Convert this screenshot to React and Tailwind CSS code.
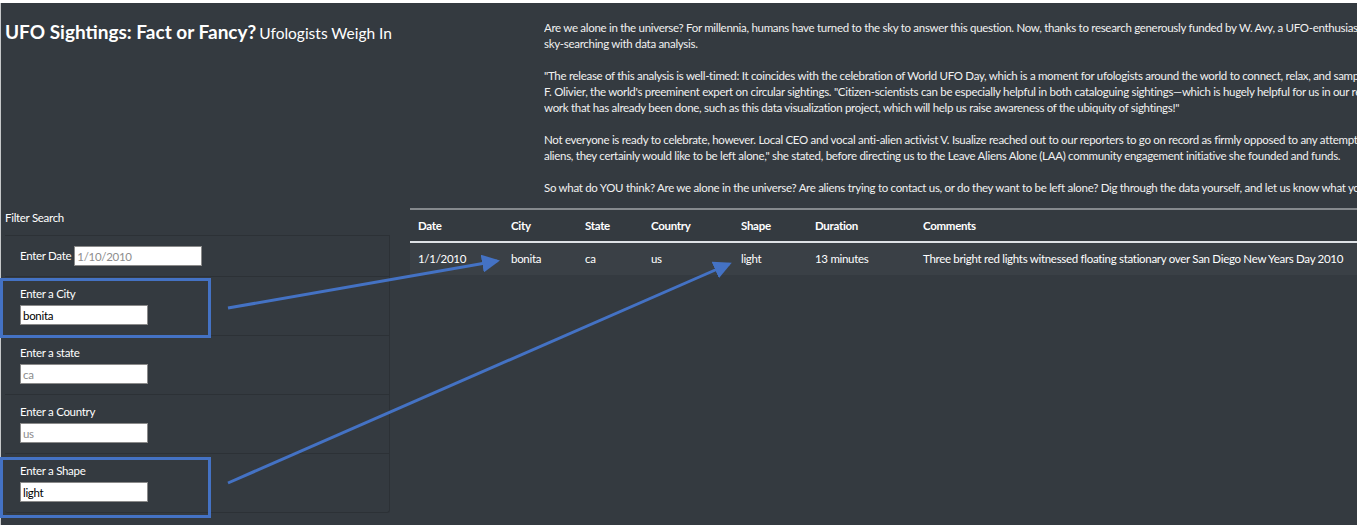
import React from 'react';

const intro = [
    [
        'Are we alone in the universe? For millennia, humans have turned to the sky to answer this question. Now, thanks to research generously funded by W. Avy, a UFO-enthusiast and citizen-scientist, we can combine our',
        'sky-searching with data analysis.',
    ],
    [
        '"The release of this analysis is well-timed: It coincides with the celebration of World UFO Day, which is a moment for ufologists around the world to connect, relax, and sample some out-of-this-world cuisine," said',
        'F. Olivier, the world\'s preeminent expert on circular sightings. "Citizen-scientists can be especially helpful in both cataloguing sightings\u2014which is hugely helpful for us in our research\u2014and in building on the',
        'work that has already been done, such as this data visualization project, which will help us raise awareness of the ubiquity of sightings!"',
    ],
    [
        'Not everyone is ready to celebrate, however. Local CEO and vocal anti-alien activist V. Isualize reached out to our reporters to go on record as firmly opposed to any attempt to contact aliens. "If there are any',
        'aliens, they certainly would like to be left alone," she stated, before directing us to the Leave Aliens Alone (LAA) community engagement initiative she founded and funds.',
    ],
    [
        'So what do YOU think? Are we alone in the universe? Are aliens trying to contact us, or do they want to be left alone? Dig through the data yourself, and let us know what you think!',
    ],
];

const columns = [
    { label: 'Date', w: 'w-[93px]' },
    { label: 'City', w: 'w-[74px]' },
    { label: 'State', w: 'w-[66px]' },
    { label: 'Country', w: 'w-[90px]' },
    { label: 'Shape', w: 'w-[74px]' },
    { label: 'Duration', w: 'w-[108px]' },
    { label: 'Comments', w: 'w-[495px]' },
];

const row = ['1/1/2010', 'bonita', 'ca', 'us', 'light', '13 minutes', 'Three bright red lights witnessed floating stationary over San Diego New Years Day 2010'];

const inputCls =
    'block h-[20px] w-[128px] border border-[#8a8a8a] bg-white px-[2px] text-[11.5px] tracking-[-0.3px] text-black placeholder:text-[#8d8d8d] outline-none';

function FilterField({ label, value, placeholder }) {
    return (
        <li className="h-[59px] border-t border-[#2c3136] px-[15px] pt-[9px]">
            <div className="leading-[16px]">{label}</div>
            <input readOnly value={value || ''} placeholder={placeholder} className={`mt-[3px] ${inputCls}`} />
        </li>
    );
}

export default function App() {
    return (
        <div className="relative h-screen min-h-[525px] overflow-hidden bg-white pt-[3px] font-['Lato',sans-serif] text-[11.5px] tracking-[-0.3px] text-white">
            <div className="h-full border-l border-[#c6c8ca] bg-[#343a40]">
                {/* header + intro text */}
                <div className="flex h-[205px]">
                    <div className="w-[543px] shrink-0 pl-[4px] pt-[17px] tracking-normal">
                        <h1 className="leading-[24px]">
                            <span className="text-[19px] font-bold">UFO Sightings: Fact or Fancy?</span>{' '}
                            <small className="text-[15.5px]">Ufologists Weigh In</small>
                        </h1>
                    </div>
                    <div className="min-w-0 flex-1 overflow-hidden pt-[17px] leading-[16px] text-[#f1f1f1]">
                        {intro.map((p, i) => (
                            <p key={i} className="mb-[16px]">
                                {p.map((line, j) => (
                                    <span key={j} className="block whitespace-nowrap">{line}</span>
                                ))}
                            </p>
                        ))}
                    </div>
                </div>

                <div className="flex">
                    {/* filters */}
                    <div className="w-[409px] shrink-0 pl-[4px]">
                        <div className="pt-[2px] leading-[16px]">Filter Search</div>
                        <ul className="mt-[9px] w-[385px] rounded-b-[3px] border-r border-b border-[#2c3136]">
                            <li className="flex h-[41px] items-center border-t border-[#2c3136] px-[15px]">
                                <span className="mr-[3px]">Enter Date</span>
                                <input readOnly placeholder="1/10/2010" className={inputCls} />
                            </li>
                            <FilterField label="Enter a City" value="bonita" />
                            <FilterField label="Enter a state" placeholder="ca" />
                            <FilterField label="Enter a Country" placeholder="us" />
                            <FilterField label="Enter a Shape" value="light" />
                        </ul>
                    </div>

                    {/* results table */}
                    <div className="min-w-0 flex-1 overflow-hidden">
                        <table className="w-[1000px] table-fixed border-collapse text-left">
                            <thead>
                                <tr className="border-t-2 border-b-2 border-t-[#85898d] border-b-[#dee2e6]">
                                    {columns.map((c) => (
                                        <th key={c.label} className={`${c.w} px-[8px] pt-[8px] pb-[7px] font-bold leading-[16px]`}>
                                            {c.label}
                                        </th>
                                    ))}
                                </tr>
                            </thead>
                            <tbody>
                                <tr className="bg-[#3a4046]">
                                    {row.map((v, i) => (
                                        <td key={i} className="whitespace-nowrap px-[8px] py-[8px] leading-[16px]">{v}</td>
                                    ))}
                                </tr>
                            </tbody>
                        </table>
                    </div>
                </div>
            </div>

            {/* annotations laid over the screenshot */}
            <div className="absolute left-0 top-[278px] h-[60px] w-[211px] border-[3px] border-[#4472c4]" />
            <div className="absolute left-0 top-[457px] h-[61px] w-[211px] border-[3px] border-[#4472c4]" />
            <svg className="pointer-events-none absolute left-0 top-0" width="1357" height="525">
                <defs>
                    <marker id="head" markerWidth="6" markerHeight="6" refX="5" refY="3" orient="auto" markerUnits="strokeWidth">
                        <path d="M0,0 L6,3 L0,6 Z" fill="#4472c4" />
                    </marker>
                </defs>
                <line x1="228" y1="308" x2="497" y2="261" stroke="#4472c4" strokeWidth="3" markerEnd="url(#head)" />
                <line x1="228" y1="483" x2="729" y2="264" stroke="#4472c4" strokeWidth="3" markerEnd="url(#head)" />
            </svg>
        </div>
    );
}
